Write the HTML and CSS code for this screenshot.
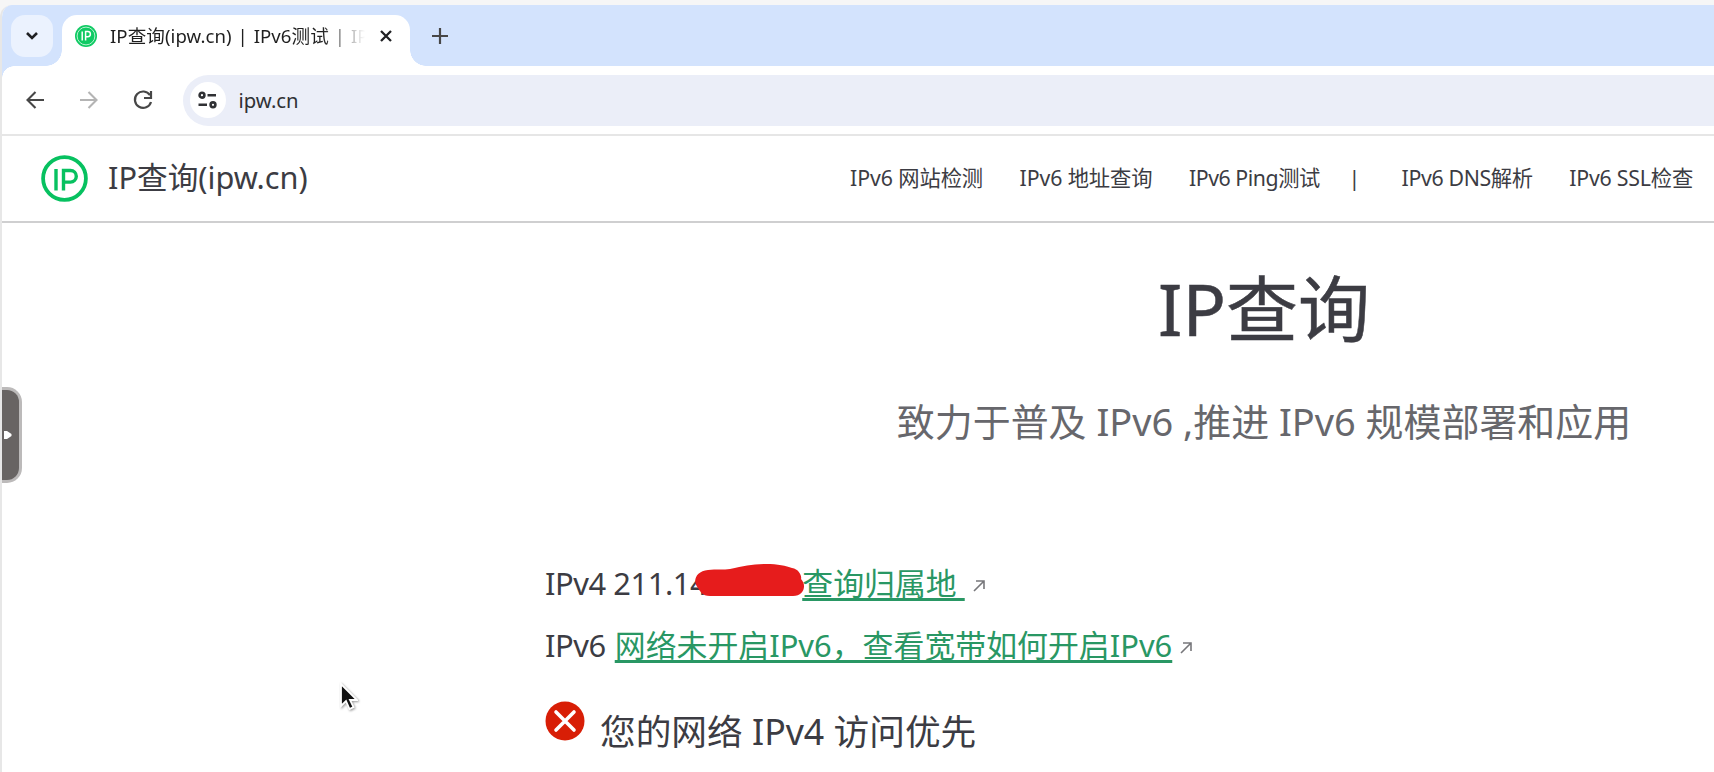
FILE: index.html
```html
<!DOCTYPE html>
<html lang="zh-CN">
<head>
    <meta charset="UTF-8">
    <meta name="viewport" content="width=device-width, initial-scale=1.0">
    <title>IP查询(ipw.cn) | IPv6测试</title>
    <link rel="stylesheet" href="styles.css">
</head>
<body>
    <div class="browser">
        <div class="tab-bar">
            <button class="tab-search">
                <svg width="14" height="10" viewBox="0 0 14 10"><path d="M2 2l5 5 5-5" fill="none" stroke="#202124" stroke-width="2.6"/></svg>
            </button>
            <div class="tab">
                <svg class="favicon" width="22" height="22" viewBox="0 0 22 22">
                    <circle cx="11" cy="11" r="11" fill="#0fca63"/>
                    <circle cx="11" cy="11" r="8.9" fill="none" stroke="#b5f0cf" stroke-width="1"/>
                    <path d="M7.2 6.5v9M10.6 15.5v-9h2.2a2.6 2.6 0 0 1 0 5.2h-2.2" fill="none" stroke="#fff" stroke-width="1.5"/>
                </svg>
                <span class="tab-title">IP查询(ipw.cn) | IPv6测试 | IP</span>
                <svg class="tab-close" width="12" height="12" viewBox="0 0 12 12"><path d="M1 1l10 10M11 1L1 11" stroke="#202124" stroke-width="2.3"/></svg>
            </div>
            <svg class="new-tab" width="16" height="16" viewBox="0 0 16 16"><path d="M8 0v16M0 8h16" stroke="#474747" stroke-width="2.2"/></svg>
        </div>

        <div class="toolbar">
            <svg class="tool" width="18" height="18" viewBox="0 0 18 18"><path d="M18 9H2M9.5 1L1.5 9l8 8" fill="none" stroke="#474747" stroke-width="2.1"/></svg>
            <svg class="tool" width="18" height="18" viewBox="0 0 18 18"><path d="M0 9h16M8.5 1l8 8-8 8" fill="none" stroke="#b4b4b4" stroke-width="2.1"/></svg>
            <svg class="tool" width="20" height="20" viewBox="0 0 20 20"><path d="M17 5.2A8.2 8.2 0 1 0 18 12" fill="none" stroke="#474747" stroke-width="2.2"/><path d="M18 1v7h-7" fill="none" stroke="#474747" stroke-width="2.2"/></svg>
            <div class="address">
                <span class="site-info">
                    <svg width="19" height="18" viewBox="0 0 19 18" fill="none" stroke="#303134" stroke-width="2.6"><circle cx="4" cy="4.2" r="2.4"/><path d="M9.5 4.2H18M.5 13.8H9"/><circle cx="15" cy="13.8" r="2.4"/></svg>
                </span>
                <span class="url">ipw.cn</span>
            </div>
        </div>

        <header class="site-header">
            <a class="brand">
                <svg width="47" height="47" viewBox="0 0 47 47" fill="none" stroke="#07c160">
                    <circle cx="23.5" cy="23.5" r="21.4" stroke-width="3.8"/>
                    <path d="M15 14v21.5M22.5 35.500V15.500h7a5.700 5.700 0 0 1 0 11.600h-7" stroke-width="3.4"/>
                </svg>
                <span class="brand-name">IP查询(ipw.cn)</span>
            </a>
            <nav class="nav-links">
                <a>IPv6 网站检测</a>
                <a>IPv6 地址查询</a>
                <a class="nav-ping">IPv6 Ping测试</a>
                <span class="divider">|</span>
                <a class="nav-dns">IPv6 DNS解析</a>
                <a class="nav-ssl">IPv6 SSL检查</a>
            </nav>
        </header>

        <main class="content">
            <h1 class="title">IP查询</h1>
            <p class="tagline">致力于普及 IPv6 ,推进 IPv6 规模部署和应用</p>

            <div class="ip-row">
                <span class="label">IPv4 211.14</span>
                <span class="masked">
                    <svg width="112" height="34" viewBox="0 0 112 34"><path d="M14 6C22 5 30 6 36 5C50 2 58 0 72 0C84 0 92 2 98 4C105 5 108 12 107 15C113 21 110 32 99 32H16C8 32 6 27 4 24C-2 17 2 7 14 6Z" fill="#e61c1c"/></svg>
                </span>
                <a class="link link-v4">查询归属地&nbsp;</a>
                <svg class="external" width="12" height="12" viewBox="0 0 12 12"><path d="M1 11L11 1M3 1h8v8" fill="none" stroke="#77777b" stroke-width="1.6"/></svg>
            </div>
            <div class="ip-row">
                <span class="label">IPv6</span>
                <a class="link link-v6">网络未开启IPv6，查看宽带如何开启IPv6</a>
                <svg class="external" width="12" height="12" viewBox="0 0 12 12"><path d="M1 11L11 1M3 1h8v8" fill="none" stroke="#77777b" stroke-width="1.6"/></svg>
            </div>
            <div class="priority">
                <svg width="40" height="40" viewBox="0 0 40 40"><circle cx="20" cy="20" r="19.500" fill="#d81e06"/><path d="M11 11l18 18M29 11L11 29" stroke="#fff" stroke-width="3.6" stroke-linecap="round"/></svg>
                <span>您的网络 IPv4 访问优先</span>
            </div>
        </main>
    </div>

    <div class="side-handle">
        <svg width="8" height="10" viewBox="0 0 8 10"><path d="M0 1h3l4.500 3v2L3 9H0z" fill="#fff"/></svg>
    </div>
    <svg class="cursor" width="19" height="29" viewBox="0 0 19 29"><path d="M2 2v22l5-5 3.500 8 4-2-3.500-7h7z" fill="#111" stroke="#fff" stroke-width="1.800"/></svg>
</body>
</html>
```

FILE: styles.css
```css
* {
    margin: 0;
    padding: 0;
    box-sizing: border-box;
}

:root {
    --text-color: #3c3c43;
    --text-light: #67676c;
    --link-color: #299764;
    --tab-bg: #d3e3fd;
}

body {
    width: 1714px;
    height: 772px;
    padding-top: 5px;
    overflow: hidden;
    background: #f6f6f6;
    color: var(--text-color);
    font-family: "Noto Sans", "Noto Sans CJK SC", sans-serif;
}

svg {
    display: block;
    flex-shrink: 0;
}

.browser {
    height: 767px;
    border-left: 2px solid #e7e7e7;
    border-top-left-radius: 12px;
    background: #fff;
    overflow: hidden;
}

/* 标签栏 */
.tab-bar {
    display: flex;
    height: 61px;
    padding: 10px 0 0 9px;
    background: var(--tab-bg);
}

.tab-search {
    position: relative;
    z-index: 1;
    display: flex;
    align-items: center;
    justify-content: center;
    width: 42px;
    height: 42px;
    border: 0;
    border-radius: 14px;
    background: #ebf2fe;
}

.tab {
    position: relative;
    display: flex;
    align-items: center;
    width: 348px;
    height: 51px;
    margin-left: 9px;
    padding: 0 18px 9px 13px;
    border-radius: 15px 15px 0 0;
    background: #fff;
}

/* 标签两侧的反向圆角 */
.tab::before,
.tab::after {
    content: '';
    position: absolute;
    bottom: 0;
    width: 16px;
    height: 16px;
}

.tab::before {
    left: -16px;
    background: radial-gradient(circle at 0 0, var(--tab-bg) 15.5px, #fff 16px);
}

.tab::after {
    right: -16px;
    background: radial-gradient(circle at 100% 0, var(--tab-bg) 15.5px, #fff 16px);
}

.tab-title {
    margin-left: 13px;
    white-space: nowrap;
    font-size: 18.6px;
    line-height: 28px;
    word-spacing: 1px;
    letter-spacing: 0.05px;
    color: #1f1f1f;
    -webkit-mask-image: linear-gradient(to right, #000 212px, transparent 255px);
    mask-image: linear-gradient(to right, #000 212px, transparent 255px);
}

.tab-close {
    margin-left: auto;
}

.new-tab {
    margin: 13px 0 0 22px;
}

/* 工具栏 */
.toolbar {
    position: relative;
    display: flex;
    align-items: center;
    height: 70px;
    padding-left: 24px;
    border-bottom: 2px solid #e6e6e6;
}

/* 工具栏左上圆角 */
.toolbar::before {
    content: '';
    position: absolute;
    left: 0;
    top: 0;
    width: 12px;
    height: 12px;
    background: radial-gradient(circle at 100% 100%, #fff 11.5px, var(--tab-bg) 12px);
}

.tool {
    margin-right: 35.5px;
}

.address {
    display: flex;
    align-items: center;
    flex: 1;
    height: 51px;
    margin-left: -6px;
    padding-left: 7px;
    border-radius: 26px 0 0 26px;
    background: #ebeef8;
}

.site-info {
    display: flex;
    align-items: center;
    justify-content: center;
    width: 36px;
    height: 36px;
    border-radius: 50%;
    background: #fff;
}

.url {
    margin-left: 13px;
    font-size: 20.3px;
    color: #303134;
}

/* 网站导航 */
.site-header {
    display: flex;
    align-items: center;
    justify-content: space-between;
    height: 87px;
    padding: 0 21px 0 39px;
    border-bottom: 2px solid #cfcfd0;
}

.brand {
    display: flex;
    align-items: center;
    gap: 20px;
}

.brand-name {
    padding-bottom: 4px;
    font-size: 30.7px;
    line-height: 40px;
}

.nav-links {
    display: flex;
    gap: 36.5px;
    padding-bottom: 2px;
    font-size: 21.3px;
    line-height: 30px;
    letter-spacing: -0.1px;
    white-space: nowrap;
}

.nav-ping {
    letter-spacing: -0.45px;
}

.nav-dns {
    letter-spacing: -0.35px;
}

.nav-ssl {
    letter-spacing: -0.2px;
}

.divider {
    margin: 0 5px 0 -8px;
}

/* 主体内容 */
.content {
    width: 1438px;
    margin-left: 543px;
    padding-top: 35px;
}

.title {
    font-size: 72px;
    font-weight: 400;
    line-height: 100px;
    text-align: center;
    -webkit-text-stroke: 0.5px var(--text-color);
}

.tagline {
    margin-top: 35px;
    font-size: 37.95px;
    line-height: 56px;
    text-align: center;
    color: var(--text-light);
}

.ip-row {
    display: flex;
    align-items: center;
    height: 62px;
    font-size: 30.9px;
    line-height: 40px;
    white-space: nowrap;
}

.tagline + .ip-row {
    margin-top: 103px;
}

.label {
    letter-spacing: -0.45px;
}

.masked {
    position: relative;
    width: 95px;
    height: 34px;
}

.masked svg {
    position: absolute;
    left: -13px;
    top: -2px;
}

.link {
    color: var(--link-color);
    text-decoration: underline;
    text-decoration-thickness: 3px;
    text-underline-offset: 3px;
    text-decoration-skip-ink: none;
}

.link-v6 {
    margin-left: 9px;
}

.external {
    margin: 5px 0 0 8px;
}

.priority {
    display: flex;
    align-items: flex-start;
    gap: 15px;
    margin-top: 25px;
    font-size: 35.7px;
    line-height: 61px;
}

/* 左侧展开按钮 */
.side-handle {
    position: absolute;
    left: 2px;
    top: 387px;
    display: flex;
    align-items: center;
    width: 20px;
    height: 96px;
    padding-left: 2px;
    border: 3px solid #bcbaba;
    border-left: 0;
    border-radius: 0 15px 15px 0;
    background: #686463;
}

.cursor {
    position: absolute;
    left: 339px;
    top: 682px;
    filter: drop-shadow(1px 1px 1px rgba(0, 0, 0, 0.4));
}
```
